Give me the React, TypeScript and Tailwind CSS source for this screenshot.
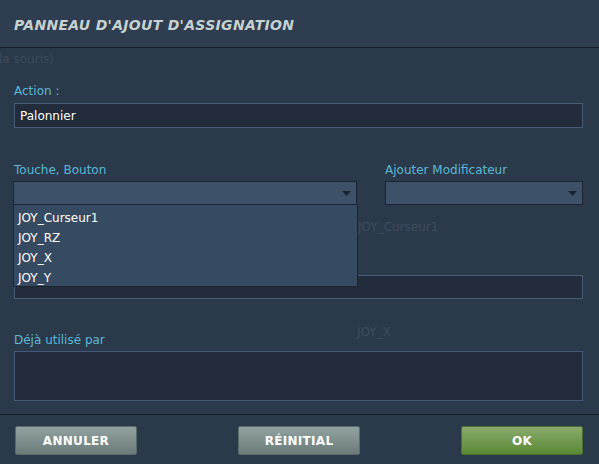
import React from 'react';

// ============================================================
// DATA
// ============================================================

const OPTIONS = ['JOY_Curseur1', 'JOY_RZ', 'JOY_X', 'JOY_Y'];

const FONT = "font-['DejaVu_Sans',sans-serif]";

// ============================================================
// PIECES
// ============================================================

function Label({ children, className = '' }: { children: React.ReactNode; className?: string }) {
  return <div className={`h-4 text-[12px] leading-[20px] text-[#5bb8d6] ${className}`}>{children}</div>;
}

function Caret() {
  return (
    <svg width="9" height="5" viewBox="0 0 9 5" className="shrink-0">
      <path d="M0 0h9L4.5 5z" fill="#1b2330" />
    </svg>
  );
}

function Select({ className = '' }: { className?: string }) {
  return (
    <div
      className={`flex h-[24px] items-center justify-end border border-[#1c2431] bg-[#3d5269] pr-[5px] ${className}`}
    >
      <Caret />
    </div>
  );
}

function Button({ label, variant = 'grey' }: { label: string; variant?: 'grey' | 'green' }) {
  const tone =
    variant === 'green'
      ? 'bg-gradient-to-b from-[#8aaa6c] to-[#5a8933] border-[#4c6f33]'
      : 'bg-gradient-to-b from-[#91a2a0] to-[#6b7b79] border-[#5b6a6a]';
  return (
    <button
      className={`flex h-[29px] w-[122px] items-center justify-center rounded-[2px] border pt-[1px] text-[12px] font-bold tracking-[0.3px] text-white ${tone}`}
    >
      {label}
    </button>
  );
}

// ============================================================
// APP
// ============================================================

export default function App() {
  return (
    <div className={`relative h-[464px] w-[599px] overflow-hidden bg-[#2b3a4b] ${FONT}`}>
      {/* Header */}
      <div className="flex h-[48px] items-center border-b border-[#161d27] bg-[#2e3e50] pl-[14px] pt-[3px]">
        <h1 className="text-[14px] font-bold italic tracking-[0.3px] text-[#c6d1d1]">
          PANNEAU D'AJOUT D'ASSIGNATION
        </h1>
      </div>

      {/* Ghost content of the window underneath */}
      <div className="pointer-events-none absolute left-[-1px] top-[50px] text-[12px] text-[#3c4b5c]">la souris)</div>
      <div className="pointer-events-none absolute left-[358px] top-[218px] text-[12px] text-[#3e4d5f]">JOY_Curseur1</div>
      <div className="pointer-events-none absolute left-[357px] top-[323px] text-[12px] text-[#3e4d5f]">JOY_X</div>

      {/* Body */}
      <div className="relative flex flex-col pl-[14px] pr-[16px]">
        <Label className="mt-[33px]">Action :</Label>
        <div className="mt-[6px] flex h-[25px] items-center border border-[#4a5d78] bg-[#222c3a] pl-[5px] text-[12px] text-white">
          Palonnier
        </div>

        <div className="mt-[32px] flex">
          <Label className="w-[371px]">Touche, Bouton</Label>
          <Label>Ajouter Modificateur</Label>
        </div>
        <div className="relative ml-[-1px] mt-[5px] flex gap-[28px]">
          <Select className="w-[345px]" />
          <Select className="w-[199px]" />

          {/* Open list */}
          <ul className="absolute left-0 top-[24px] z-10 h-[82px] w-[345px] border border-t-0 border-[#1c2431] bg-[#364b61] pt-[3px] text-[12px] text-white">
            {OPTIONS.map((o) => (
              <li key={o} className="flex h-[20px] items-center pl-[4px]">
                {o}
              </li>
            ))}
          </ul>
        </div>

        <div className="mt-[70px] h-[24px] border border-[#4a5d78] bg-[#222c3a]" />

        <Label className="mt-[31px]">Déjà utilisé par</Label>
        <div className="mt-[5px] h-[50px] border border-[#45597a] bg-[#222c3a]" />
      </div>

      {/* Footer */}
      <div className="mt-[13px] flex h-[49px] items-start justify-between border-t border-[#161d27] pl-[15px] pr-[16px] pt-[11px]">
        <Button label="ANNULER" />
        <Button label="RÉINITIAL" />
        <Button label="OK" variant="green" />
      </div>
    </div>
  );
}
